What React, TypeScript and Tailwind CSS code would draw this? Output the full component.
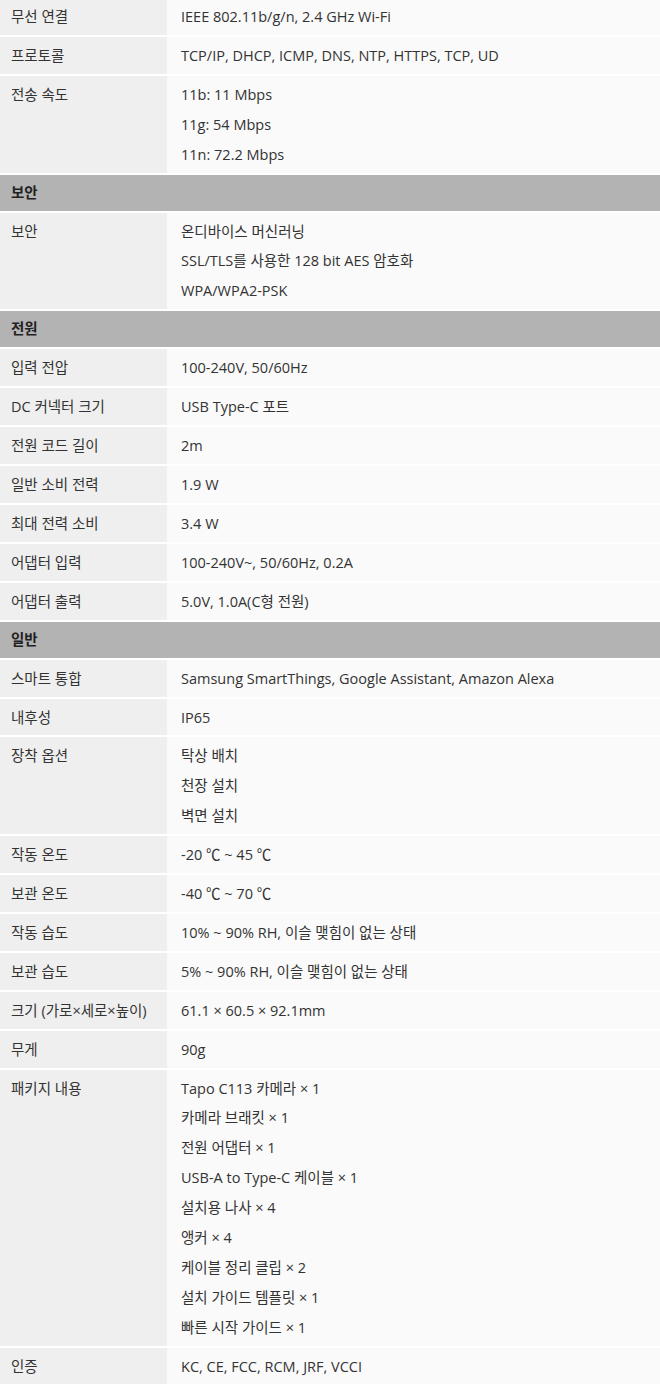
import React from "react";

type Row = { label: string; values: string[] };
type Section = { title?: string; rows: Row[] };

const sections: Section[] = [
  {
    rows: [
      { label: "무선 연결", values: ["IEEE 802.11b/g/n, 2.4 GHz Wi-Fi"] },
      { label: "프로토콜", values: ["TCP/IP, DHCP, ICMP, DNS, NTP, HTTPS, TCP, UD"] },
      { label: "전송 속도", values: ["11b: 11 Mbps", "11g: 54 Mbps", "11n: 72.2 Mbps"] },
    ],
  },
  {
    title: "보안",
    rows: [
      {
        label: "보안",
        values: ["온디바이스 머신러닝", "SSL/TLS를 사용한 128 bit AES 암호화", "WPA/WPA2-PSK"],
      },
    ],
  },
  {
    title: "전원",
    rows: [
      { label: "입력 전압", values: ["100-240V, 50/60Hz"] },
      { label: "DC 커넥터 크기", values: ["USB Type-C 포트"] },
      { label: "전원 코드 길이", values: ["2m"] },
      { label: "일반 소비 전력", values: ["1.9 W"] },
      { label: "최대 전력 소비", values: ["3.4 W"] },
      { label: "어댑터 입력", values: ["100-240V~, 50/60Hz, 0.2A"] },
      { label: "어댑터 출력", values: ["5.0V, 1.0A(C형 전원)"] },
    ],
  },
  {
    title: "일반",
    rows: [
      { label: "스마트 통합", values: ["Samsung SmartThings, Google Assistant, Amazon Alexa"] },
      { label: "내후성", values: ["IP65"] },
      { label: "장착 옵션", values: ["탁상 배치", "천장 설치", "벽면 설치"] },
      { label: "작동 온도", values: ["-20 ℃ ~ 45 ℃"] },
      { label: "보관 온도", values: ["-40 ℃ ~ 70 ℃"] },
      { label: "작동 습도", values: ["10% ~ 90% RH, 이슬 맺힘이 없는 상태"] },
      { label: "보관 습도", values: ["5% ~ 90% RH, 이슬 맺힘이 없는 상태"] },
      { label: "크기 (가로×세로×높이)", values: ["61.1 × 60.5 × 92.1mm"] },
      { label: "무게", values: ["90g"] },
      {
        label: "패키지 내용",
        values: [
          "Tapo C113 카메라 × 1",
          "카메라 브래킷 × 1",
          "전원 어댑터 × 1",
          "USB-A to Type-C 케이블 × 1",
          "설치용 나사 × 4",
          "앵커 × 4",
          "케이블 정리 클립 × 2",
          "설치 가이드 템플릿 × 1",
          "빠른 시작 가이드 × 1",
        ],
      },
      { label: "인증", values: ["KC, CE, FCC, RCM, JRF, VCCI"] },
    ],
  },
];

export default function App() {
  return (
    <div className="w-[660px] h-[1384px] overflow-hidden bg-[#fafafa] text-[14.5px] text-[#333] font-['Open_Sans','Noto_Sans_CJK_KR',sans-serif]">
      <div className="-mt-[2px] flex flex-col">
        {sections.map((section, si) => (
          <div key={si} className="flex flex-col">
            {section.title && (
              <div className="h-[38px] flex items-center bg-[#b3b3b3] border-b-2 border-white px-[11px] font-bold text-[#222]">
                {section.title}
              </div>
            )}
            {section.rows.map((row) => (
              <div key={row.label} className="flex border-b-2 border-white">
                <div className="w-[167px] shrink-0 bg-[#efefef] pl-[11px] pt-[4px] pb-[3px] leading-[29.9px] whitespace-nowrap">
                  {row.label}
                </div>
                <div className="flex-1 flex flex-col bg-[#fafafa] pl-[14px] pt-[4px] pb-[3px] leading-[29.9px]">
                  {row.values.map((v) => (
                    <span key={v} className="whitespace-nowrap">
                      {v}
                    </span>
                  ))}
                </div>
              </div>
            ))}
          </div>
        ))}
      </div>
    </div>
  );
}
